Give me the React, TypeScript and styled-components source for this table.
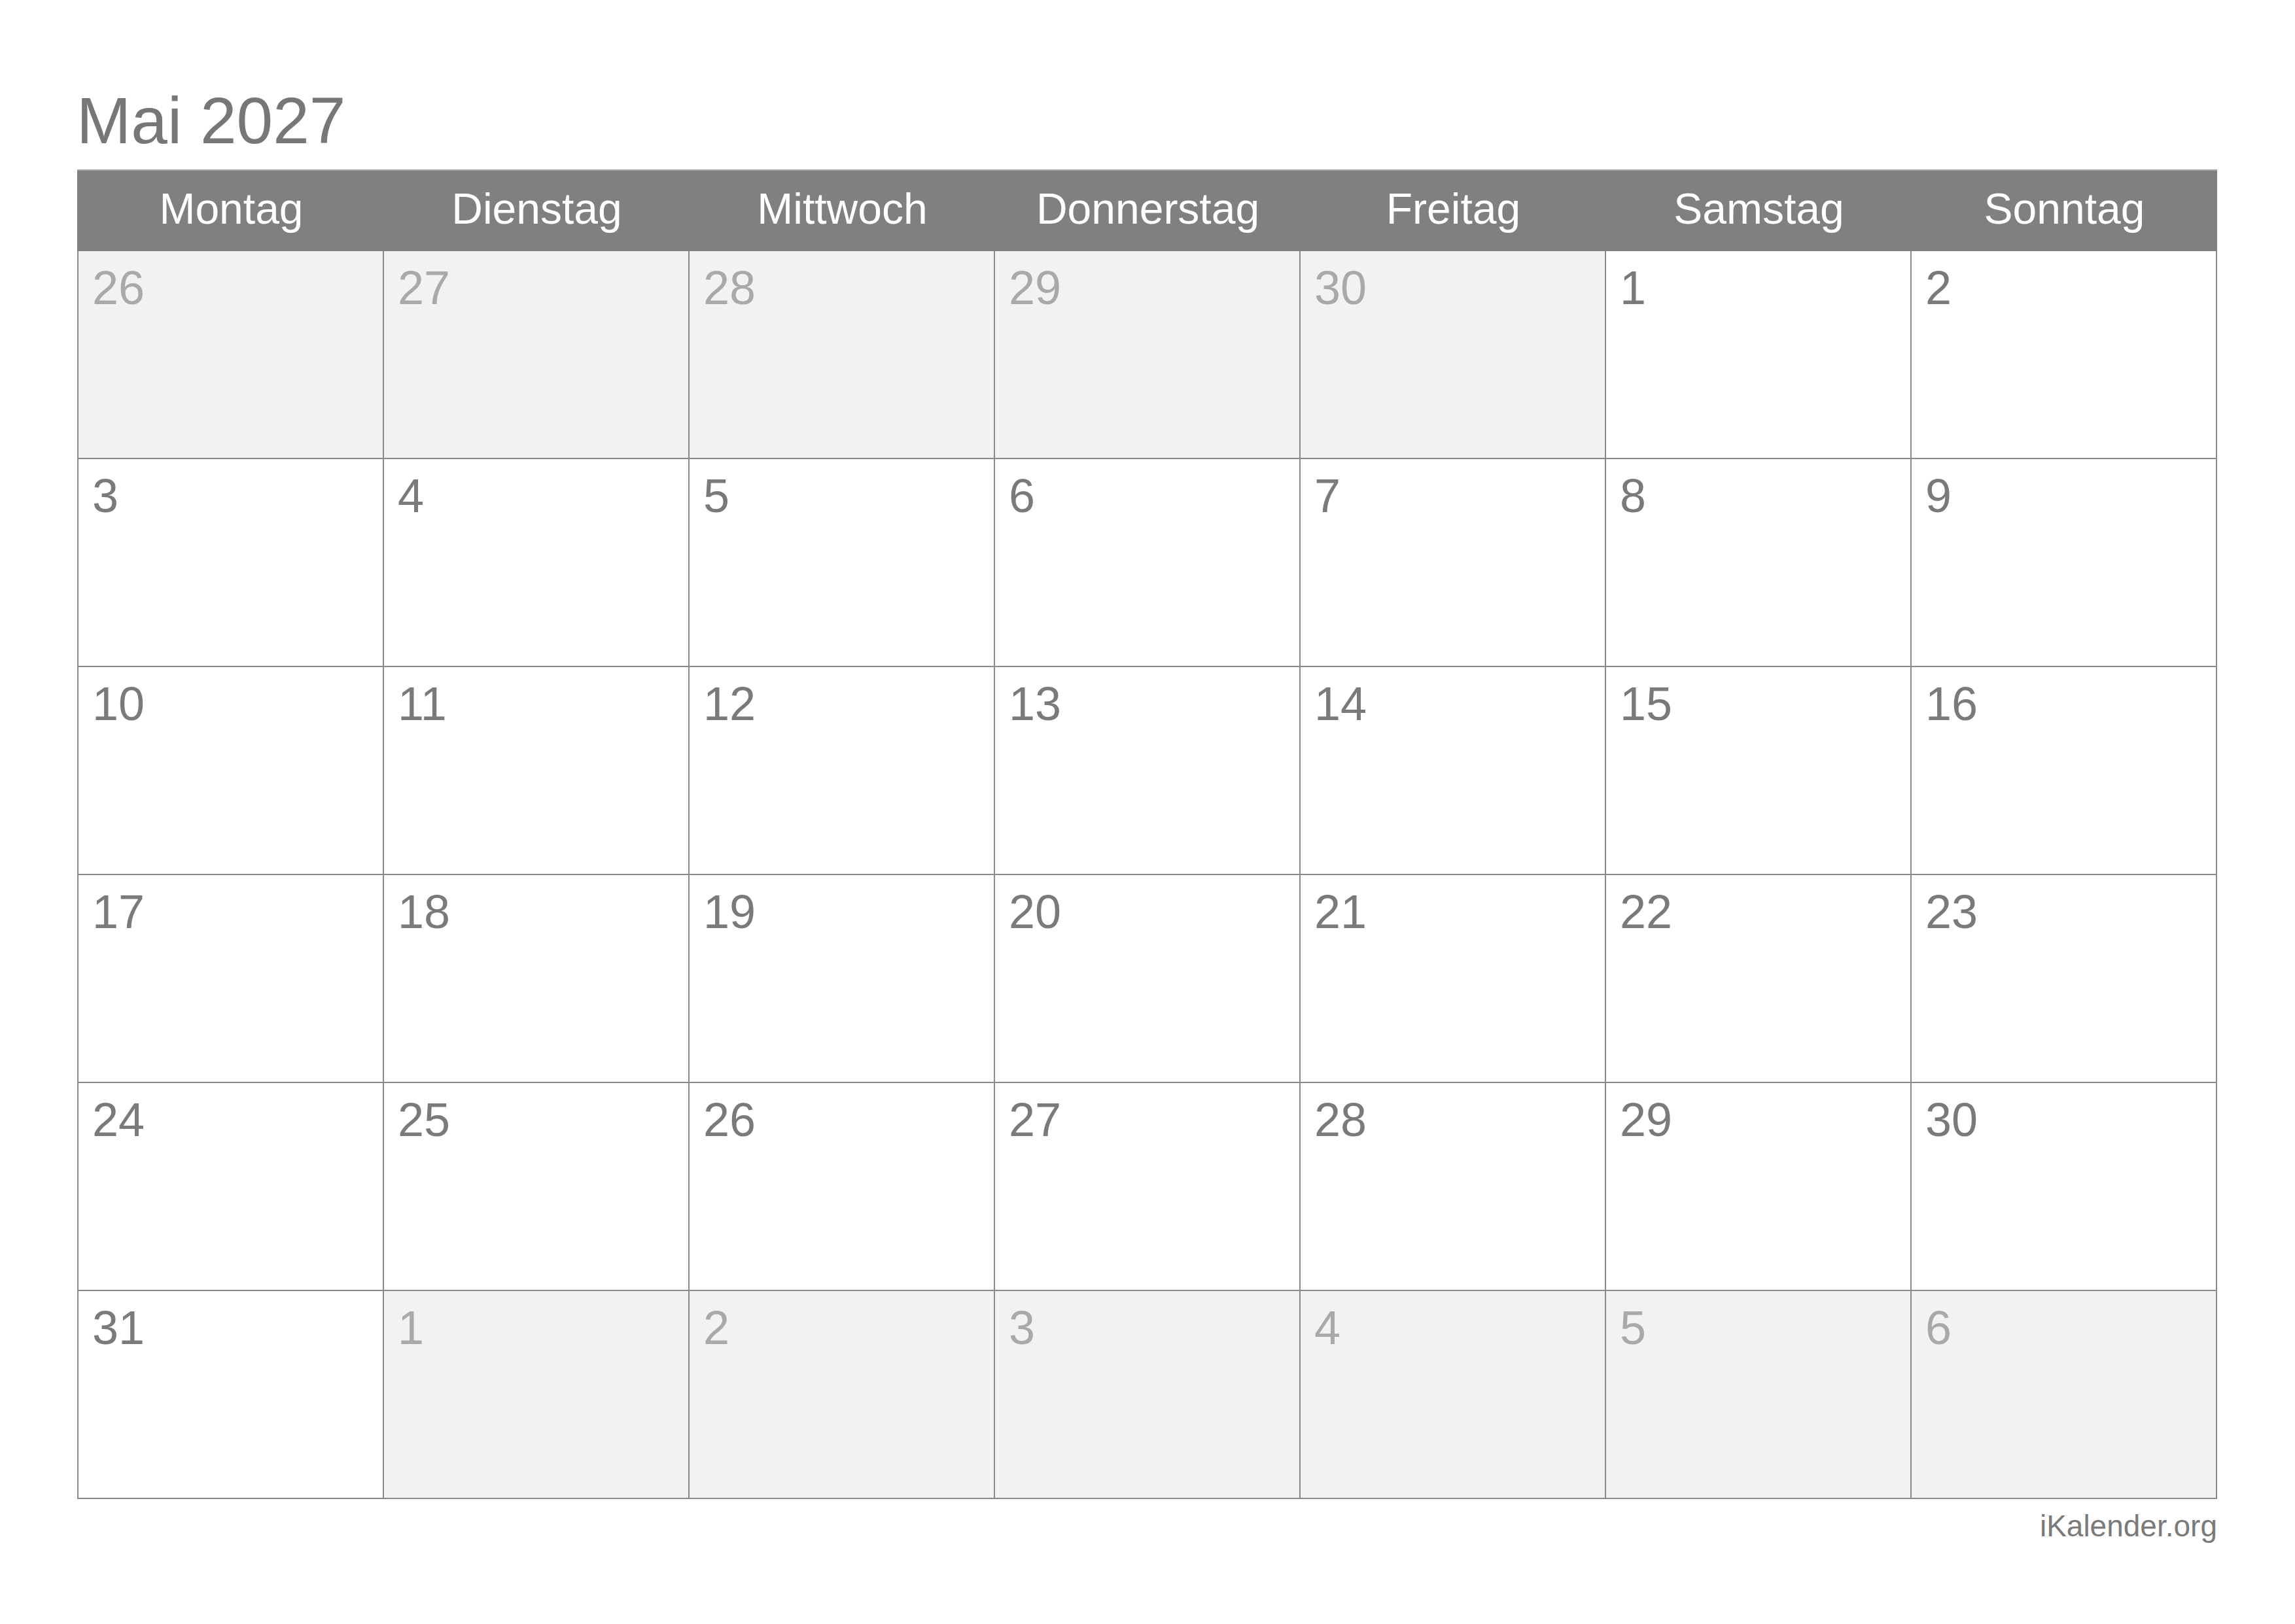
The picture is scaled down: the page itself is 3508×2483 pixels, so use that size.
import React from 'react';
import styled, { createGlobalStyle } from 'styled-components';

const GlobalStyle = createGlobalStyle`
  html, body {
    margin: 0;
    padding: 0;
    background: #ffffff;
  }
  body {
    font-family: "Liberation Sans", Arial, Helvetica, sans-serif;
  }
`;

const Page = styled.div`
  width: 3508px;
  height: 2483px;
  box-sizing: border-box;
  padding: 127px 0 0 118px;
  display: flex;
  flex-direction: column;
`;

const Title = styled.h1`
  margin: 0 0 17px -1px;
  font-size: 100px;
  font-weight: normal;
  line-height: normal;
  color: #777777;
`;

const Table = styled.div`
  width: 3271px;
  box-sizing: border-box;
  display: grid;
  grid-template-columns: repeat(7, 1fr);
  border-left: 2px solid #8a8a8a;
`;

const HeaderCell = styled.div`
  height: 125px;
  box-sizing: border-box;
  padding-bottom: 8px;
  background: #808080;
  color: #ffffff;
  font-size: 66px;
  line-height: 117px;
  text-align: center;
  border-top: 2px solid #a6a6a6;
  margin-left: -2px;
  padding-left: 2px;
`;

const DayCell = styled.div<{ $out: boolean }>`
  height: 318px;
  box-sizing: border-box;
  padding: 15px 0 0 21px;
  border-right: 2px solid #8a8a8a;
  border-bottom: 2px solid #8a8a8a;
  background: ${p => (p.$out ? '#f2f2f2' : '#ffffff')};
  color: ${p => (p.$out ? '#a9a9a9' : '#7a7a7a')};
  font-size: 72px;
  line-height: normal;
`;

const Footer = styled.div`
  width: 3271px;
  margin-top: 14px;
  text-align: right;
  font-size: 46px;
  color: #7a7a7a;
`;

const weekdays = ['Montag', 'Dienstag', 'Mittwoch', 'Donnerstag', 'Freitag', 'Samstag', 'Sonntag'];

// Mai 2027 beginnt am Samstag
const days: { day: number; out: boolean }[] = [];
[26, 27, 28, 29, 30].forEach(d => days.push({ day: d, out: true }));
for (let d = 1; d <= 31; d++) days.push({ day: d, out: false });
for (let d = 1; d <= 6; d++) days.push({ day: d, out: true });

const App: React.FC = () => {
  return (
    <>
      <GlobalStyle />
      <Page>
        <Title>Mai 2027</Title>
        <Table>
          {weekdays.map(w => (
            <HeaderCell key={w}>{w}</HeaderCell>
          ))}
          {days.map((d, i) => (
            <DayCell key={i} $out={d.out}>
              {d.day}
            </DayCell>
          ))}
        </Table>
        <Footer>iKalender.org</Footer>
      </Page>
    </>
  );
};

export default App;
